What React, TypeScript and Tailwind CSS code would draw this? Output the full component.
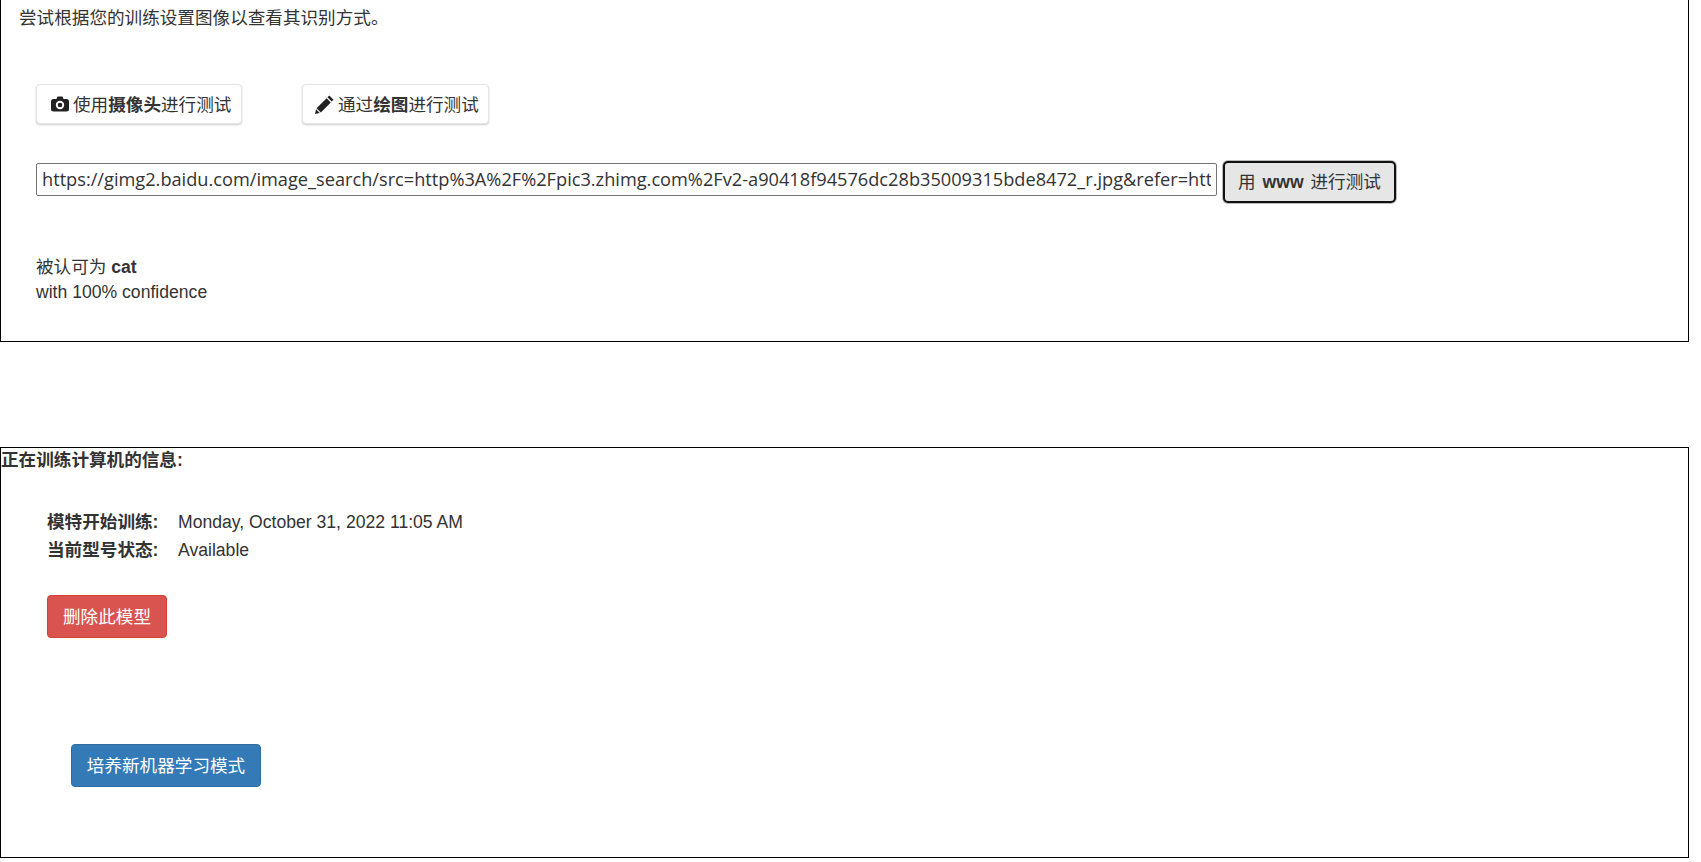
const url = "https://gimg2.baidu.com/image_search/src=http%3A%2F%2Fpic3.zhimg.com%2Fv2-a90418f94576dc28b35009315bde8472_r.jpg&refer=http%3A%2F%2Fpic3.zhimg.com";
const font = "font-['Liberation_Sans','Noto_Sans_CJK_SC',sans-serif]";
const modeBtn = "flex items-center h-[40px] bg-white border border-[#e4e4e4] rounded-[4px] shadow-[0_1px_2px_rgba(0,0,0,0.2)] text-[#333] text-[17.6px]";

function CameraIcon() {
  return (
    <svg viewBox="0 0 18 16" className="w-[18px] h-[16px] mr-[4px] mb-[3px] text-[#222]" fill="currentColor">
      <path d="M6 1.5Q6.2.6 7 .6h4q.8 0 1 .9l.4 1.5H15.500Q18 3 18 5.500V13q0 2.500-2.500 2.500h-13Q0 15.500 0 13V5.500Q0 3 2.500 3h3.100z" />
      <circle cx="9" cy="9" r="4.200" fill="#fff" />
      <circle cx="9" cy="9" r="2.300" />
    </svg>
  );
}

function PencilIcon() {
  return (
    <svg viewBox="0 0 18 18" className="w-[19px] h-[19px] mr-[4px] mb-[3px] text-[#222]" fill="currentColor">
      <path d="M13.500.5 17.500 4.500 15.800 6.200 11.800 2.200z" />
      <path d="M11 3 15 7 5.500 16.500 1.500 12.500z" />
      <path d="M1 13.500 4.500 17 0 18z" />
    </svg>
  );
}

export default function App() {
  return (
    <div className={`${font} w-[1689px] h-[862px] bg-white text-[#333] text-[17.6px] leading-[23px] overflow-hidden`}>
      <section className="h-[342px] border border-t-0 border-black pl-[18px] pt-[7px]">
        <p>尝试根据您的训练设置图像以查看其识别方式。</p>
        <div className="flex gap-[60px] ml-[17px] mt-[54px]">
          <button className={`${modeBtn} w-[206px] pl-[14px] pt-[3px]`}>
            <CameraIcon />
            <span>使用<b>摄像头</b>进行测试</span>
          </button>
          <button className={`${modeBtn} w-[187px] pl-[12px] pt-[3px]`}>
            <PencilIcon />
            <span>通过<b>绘图</b>进行测试</span>
          </button>
        </div>
        <div className="flex items-start gap-[6px] ml-[17px] mt-[37px]">
          <input
            readOnly
            value={url}
            className="w-[1181px] h-[33px] mt-[2px] px-[5px] pb-[2px] bg-white border border-[#767676] rounded-[2px] text-[#333] text-[18.2px] font-['Open_Sans','Noto_Sans_CJK_SC',sans-serif] outline-none"
          />
          <button className="w-[173px] h-[42px] bg-[#e6e6e6] border-2 border-[#111] rounded-[5px] shadow-[0_0_0_1px_#bbb] text-[#333] text-[17.6px] [word-spacing:2px]">
            用 <b>www</b> 进行测试
          </button>
        </div>
        <div className="ml-[17px] mt-[52px] leading-[25px]">
          <p>被认可为 <b>cat</b></p>
          <p>with 100% confidence</p>
        </div>
      </section>

      <section className="h-[411px] mt-[105px] border border-black pt-[1px]">
        <h2 className="font-bold leading-[23px]">正在训练计算机的信息:</h2>
        <dl className="grid grid-cols-[131px_1fr] ml-[46px] mt-[36px] leading-[28px]">
          <dt className="font-bold">模特开始训练:</dt>
          <dd>Monday, October 31, 2022 11:05 AM</dd>
          <dt className="font-bold">当前型号状态:</dt>
          <dd>Available</dd>
        </dl>
        <button className="block w-[120px] h-[43px] ml-[46px] mt-[31px] pt-[1px] bg-[#d9534f] border border-[#d43f3a] rounded-[4px] text-white text-[17.6px]">
          删除此模型
        </button>
        <button className="block w-[190px] h-[43px] ml-[70px] mt-[106px] pt-[1px] bg-[#337ab7] border border-[#2e6da4] rounded-[4px] text-white text-[17.6px]">
          培养新机器学习模式
        </button>
      </section>
    </div>
  );
}
